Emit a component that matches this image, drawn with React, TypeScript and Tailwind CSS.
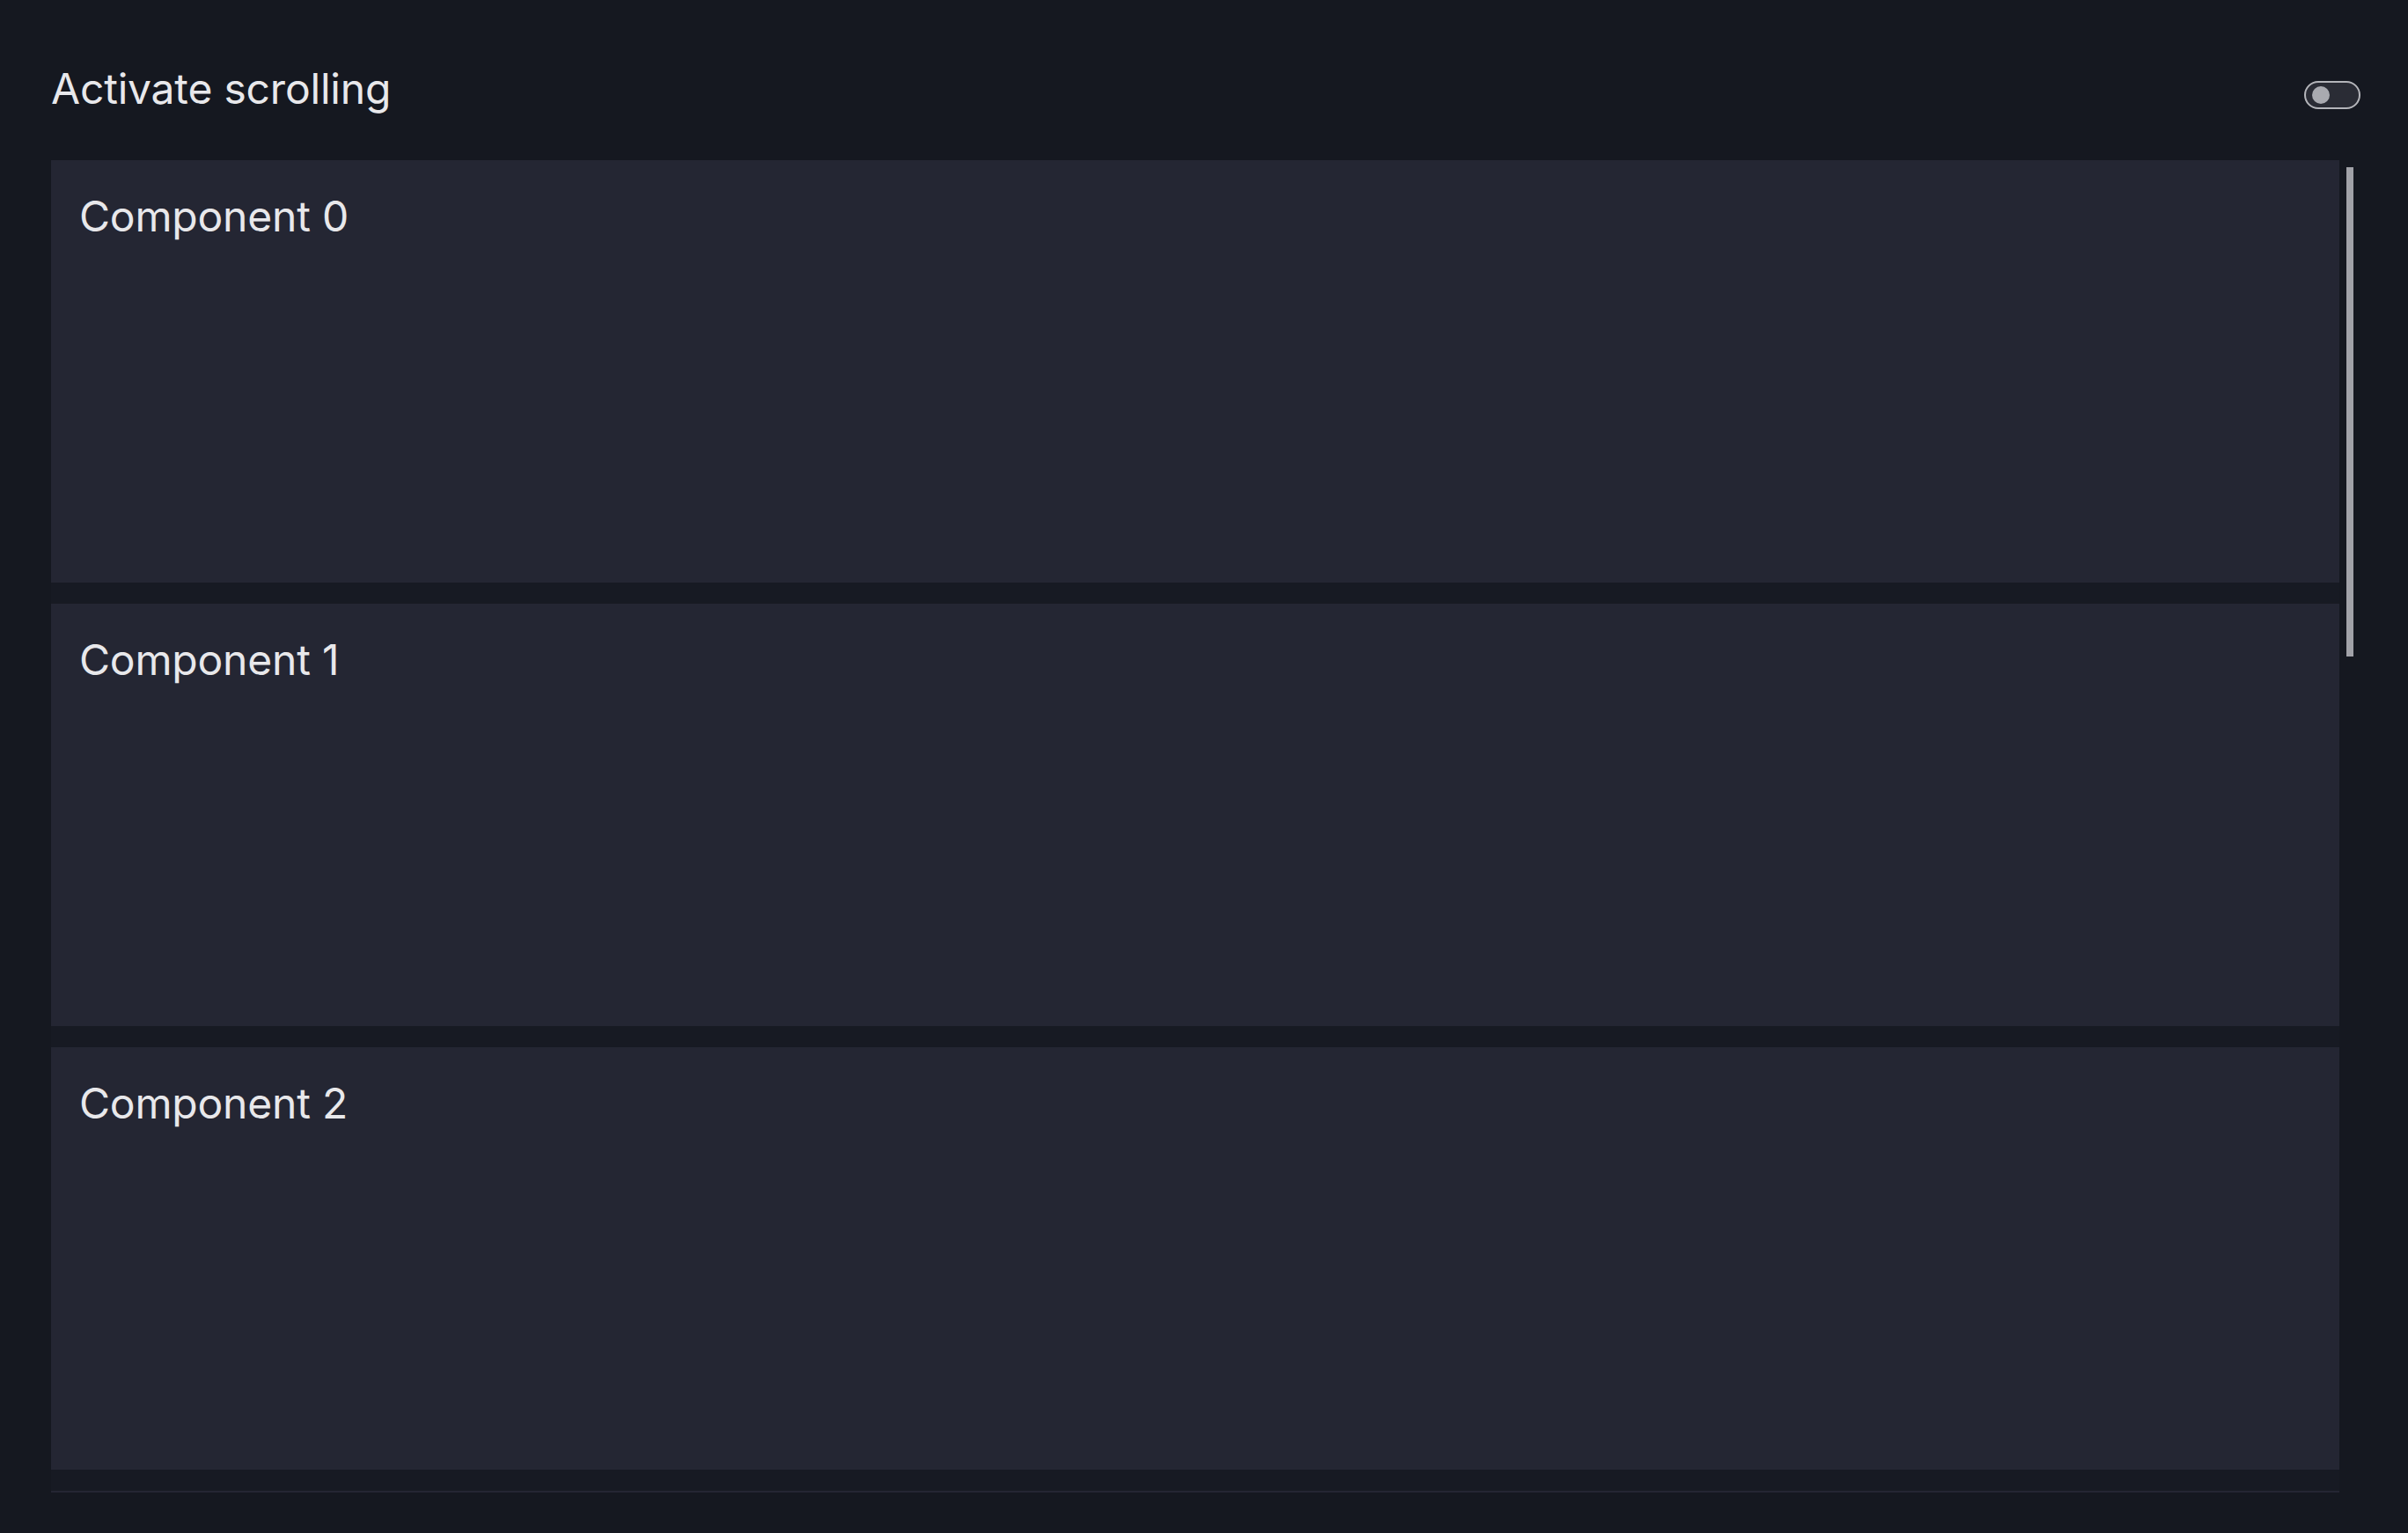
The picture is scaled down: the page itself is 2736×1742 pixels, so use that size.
import { useState } from 'react';

const items = ['Component 0', 'Component 1', 'Component 2', ''];

export default function App() {
  const [enabled, setEnabled] = useState(false);

  return (
    <div
      className="h-[1742px] w-full overflow-hidden bg-[#151820] pl-[58px] pr-[54px] text-[#e8e8eb]"
      style={{ fontFamily: 'Inter, "Noto Sans", sans-serif' }}
    >
      <div className="flex h-[182px] items-start justify-between pt-[65px]">
        <h1 className="text-[48px] leading-[72px] font-normal tracking-[-0.2px]">Activate scrolling</h1>
        <button
          onClick={() => setEnabled(!enabled)}
          className="mt-[27px] flex h-[32px] w-[64px] items-center rounded-full border-2 border-[#b4b5ba] bg-[#2a2c35] px-[7px]"
        >
          <span className="block h-[20px] w-[20px] rounded-full bg-[#a9aab0]" />
        </button>
      </div>

      <div className="flex h-[1514px] bg-[#171a23]">
        <div className="flex w-[2600px] flex-col gap-6 overflow-hidden">
          {items.map((label, i) => (
            <div key={i} className="h-[480px] shrink-0 bg-[#242633] pl-8 pt-[28px]">
              {label && <p className="text-[48px] leading-[72px] tracking-[-0.2px]">{label}</p>}
            </div>
          ))}
        </div>
        <div className="flex w-[24px] justify-center bg-[#151820] pt-2">
          <div className="h-[556px] w-[8px] bg-[#a1a2a8]" />
        </div>
      </div>
    </div>
  );
}
